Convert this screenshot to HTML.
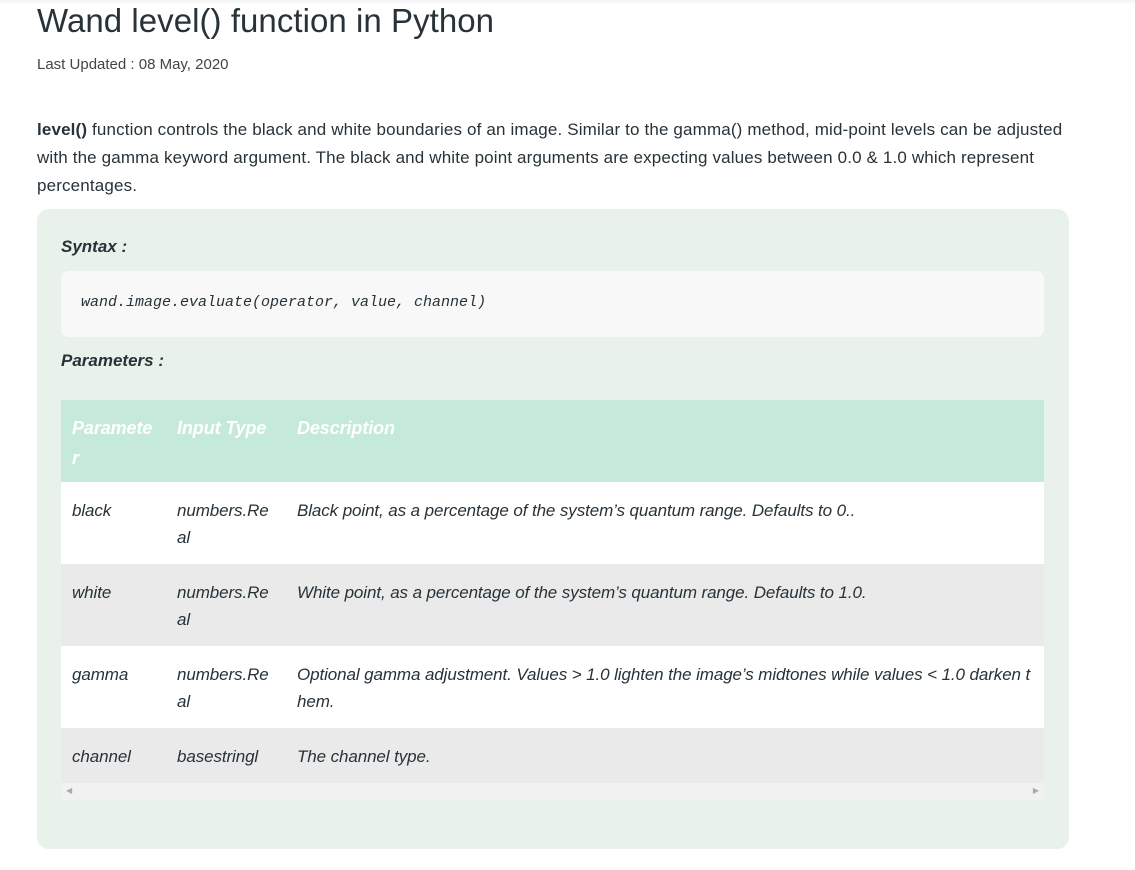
<!DOCTYPE html>
<html><head><meta charset="utf-8"><style>
*{margin:0;padding:0;box-sizing:border-box}
body{width:1135px;height:870px;background:#fff;font-family:"Liberation Sans",sans-serif;color:#273239;position:relative;overflow:hidden}
.top{position:absolute;left:0;top:0;width:1135px;height:4px;background:linear-gradient(#f2f2f2,#fff)}
h1{position:absolute;left:37px;top:0px;font-size:33px;letter-spacing:0.05px;font-weight:normal;line-height:42px;color:#273239}
.date{position:absolute;left:37px;top:55px;font-size:15px;color:#444;line-height:20px}
.p{position:absolute;left:37px;top:116px;width:1040px;font-size:17px;line-height:28px;letter-spacing:0.15px;color:#273239}
.box{position:absolute;left:37px;top:209px;width:1032px;height:640px;background:#e8f1ea;border-radius:12px}
.lbl{position:absolute;left:24px;font-weight:bold;font-style:italic;font-size:17px;color:#273239}
.code{position:absolute;left:24px;top:62px;width:983px;height:66px;background:#f8f8f8;border-radius:8px;font-family:"Liberation Mono",monospace;font-style:italic;font-size:15px;padding:23px 20px;color:#273239}
table{position:absolute;left:24px;top:191px;width:983px;border-collapse:collapse;font-style:italic;font-size:17px;letter-spacing:-0.1px;color:#273239;table-layout:fixed}
td,th{text-align:left;vertical-align:top;padding:15px 11px 0 11px;line-height:27px;font-weight:normal;white-space:nowrap}
th{color:#fff;font-weight:bold;background:#c5ead9;height:82px;font-size:18px;padding-top:13px;line-height:30px}
tr.w td{background:#fff;height:82px}
tr.g td{background:#eaeaea;height:82px}
tr.l td{height:55px}
.sb{position:absolute;left:24px;top:574px;width:983px;height:17px;background:#f1f1f1;font-size:8px;color:#aaa}
</style></head><body>
<div class="top"></div>
<h1>Wand level() function in Python</h1>
<div class="date">Last Updated : 08 May, 2020</div>
<div class="p"><b>level()</b> function controls the black and white boundaries of an image. Similar to the gamma() method, mid-point levels can be adjusted<br>with the gamma keyword argument. The black and white point arguments are expecting values between 0.0 &amp; 1.0 which represent<br>percentages.</div>
<div class="box">
<div class="lbl" style="top:28px">Syntax :</div>
<div class="code">wand.image.evaluate(operator, value, channel)</div>
<div class="lbl" style="top:142px">Parameters :</div>
<table>
<tr><th style="width:105px">Paramete<br>r</th><th style="width:120px">Input Type</th><th>Description</th></tr>
<tr class="w"><td>black</td><td>numbers.Re<br>al</td><td>Black point, as a percentage of the system’s quantum range. Defaults to 0..</td></tr>
<tr class="g"><td>white</td><td>numbers.Re<br>al</td><td>White point, as a percentage of the system’s quantum range. Defaults to 1.0.</td></tr>
<tr class="w"><td>gamma</td><td>numbers.Re<br>al</td><td>Optional gamma adjustment. Values &gt; 1.0 lighten the image’s midtones while values &lt; 1.0 darken t<br>hem.</td></tr>
<tr class="g l"><td>channel</td><td>basestringl</td><td>The channel type.</td></tr>
</table>
<div class="sb"><span style="position:absolute;left:5px;top:3px">◀</span><span style="position:absolute;right:5px;top:3px">▶</span></div>
</div>
</body></html>
